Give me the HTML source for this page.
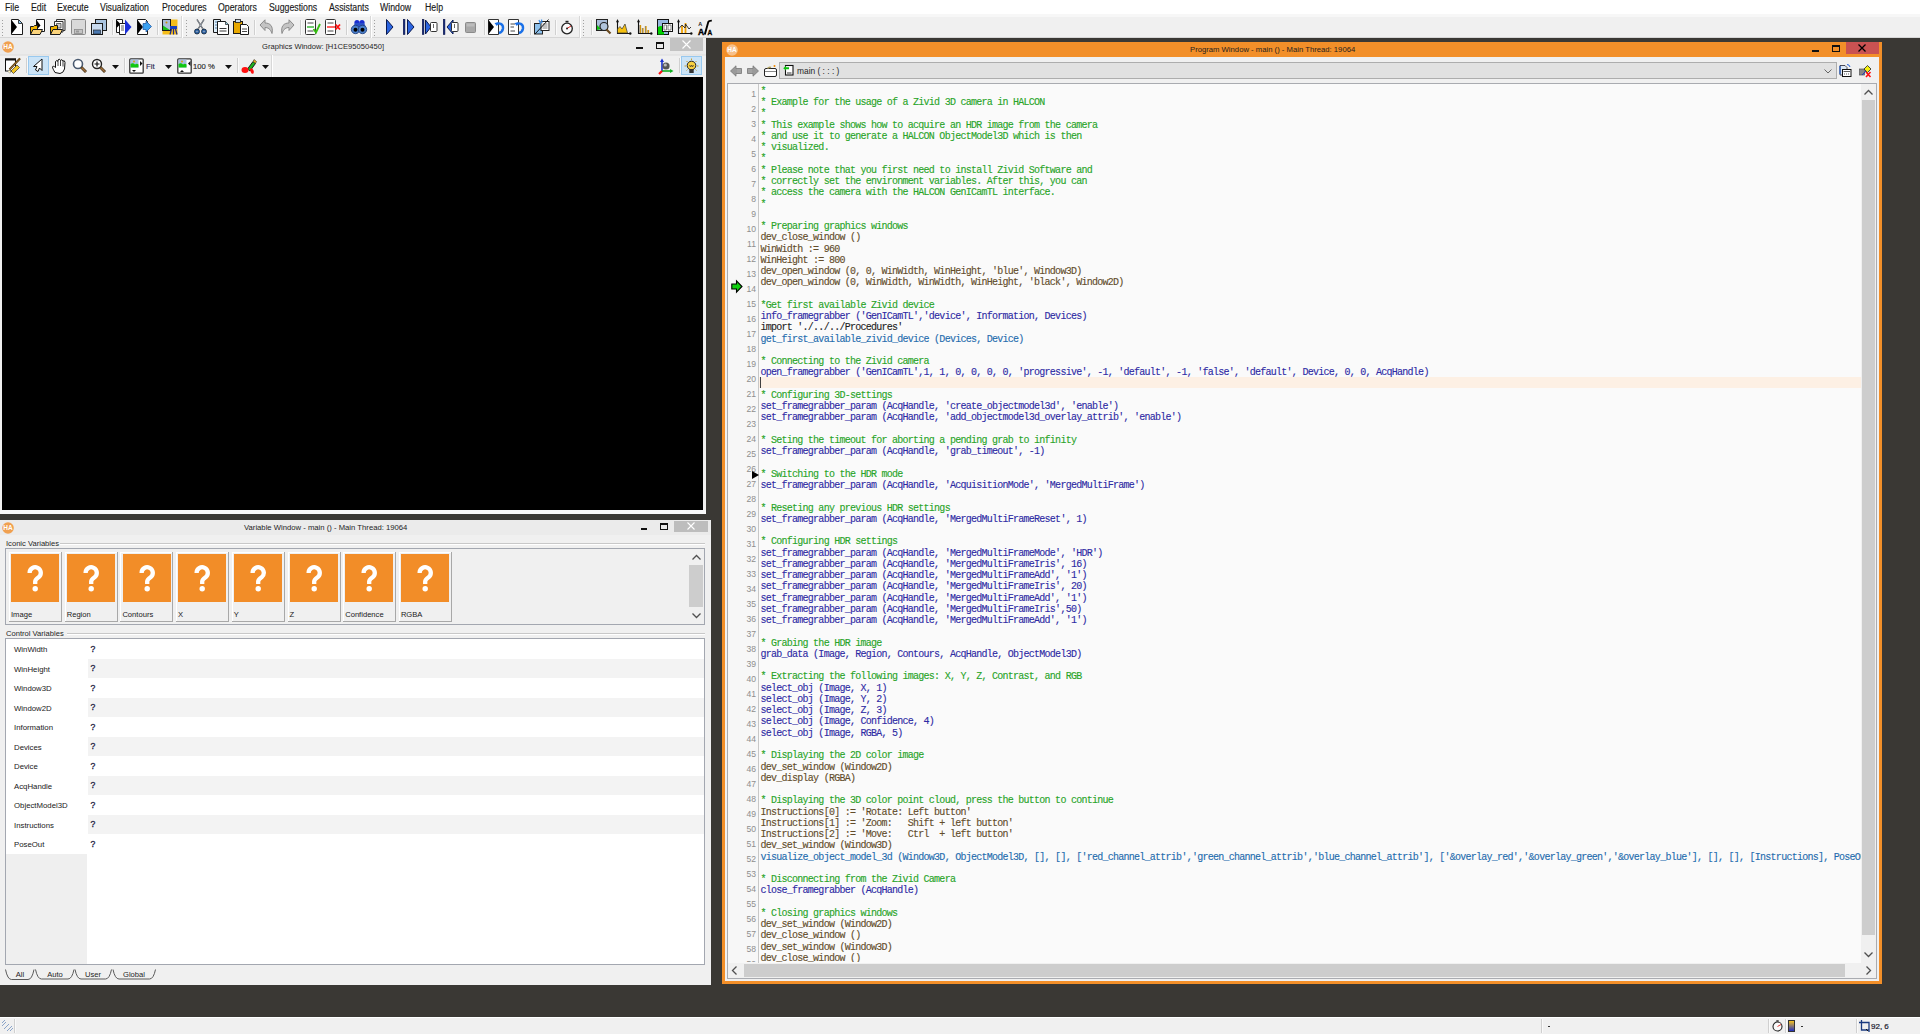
<!DOCTYPE html><html><head><meta charset="utf-8"><style>
*{margin:0;padding:0;box-sizing:border-box}
html,body{width:1920px;height:1034px;overflow:hidden}
body{position:relative;background:#3a3834;font-family:"Liberation Sans",sans-serif;font-size:10px;color:#000}
.a{position:absolute}
svg{position:absolute;overflow:visible}
#menubar{left:0;top:0;width:1920px;height:17px;background:linear-gradient(#fff 0,#fff 14px,#f7f7f7 14px,#f7f7f7 17px)}
#menubar span{position:absolute;top:2.1px;font-size:10px;line-height:12px;color:#1a1a1a;transform:scaleX(0.875);transform-origin:0 0;-webkit-text-stroke:0.15px #1a1a1a}
#toolbar{left:0;top:17px;width:1920px;height:21px;background:#f0f0f0;border-bottom:1px solid #d6d6d6}
.code{position:absolute;left:760.5px;white-space:pre;font-family:"Liberation Mono",monospace;font-size:10px;letter-spacing:-0.74px;-webkit-text-stroke:0.12px;line-height:11.26px;height:11.26px}
.c{color:#28a428}.o{color:#2e2aa4}.d{color:#624c2a}.p{color:#1f6cae}.k{color:#1e1e1e}
.ln{position:absolute;width:30px;left:726px;text-align:right;font-size:8.6px;color:#8e8e8e;line-height:10px}
.ttl{position:absolute;font-size:7.7px;line-height:10px;color:#1e1e1e;white-space:nowrap}
.vname{position:absolute;left:14px;font-size:7.8px;line-height:10px;color:#202020}
.vq{position:absolute;left:90.5px;font-size:8.6px;line-height:10px;color:#202040;-webkit-text-stroke:0.3px #202040}
.tile{position:absolute;top:552px;width:53px;height:70px;background:#f0f0f0;border-right:1px solid #a8a8a8;border-bottom:1px solid #a8a8a8;box-shadow:inset 1px 1px 0 #fff}
.tile .or{position:absolute;left:2.25px;top:2px;width:48px;height:48px;background:#f28d28}
.tile .q{position:absolute;left:0;top:9px;width:48px;text-align:center;font-size:33px;font-weight:bold;color:#fff;line-height:33px}
.tile .lb{position:absolute;left:2px;top:57.5px;font-size:7.6px;line-height:10px;color:#202020}
</style></head><body>
<div id="menubar" class="a"><span style="left:5px">File</span><span style="left:31px">Edit</span><span style="left:57px">Execute</span><span style="left:100px">Visualization</span><span style="left:162px">Procedures</span><span style="left:218px">Operators</span><span style="left:269px">Suggestions</span><span style="left:329px">Assistants</span><span style="left:380px">Window</span><span style="left:425px">Help</span></div>
<div id="toolbar" class="a"></div>
<svg style="left:10px;top:19px" width="16" height="16" viewBox="0 0 16 16"><path d="M1.5 .5H8.5L12.5 4.5V15.5H1.5Z" fill="#fff" stroke="#1a1a1a"/><path d="M1.5 1L7 8L1.5 15Z" fill="#000"/><path d="M8.5 1V4.5H12" fill="#8cc8f0" stroke="#1a1a1a" stroke-width=".8"/></svg>
<svg style="left:30px;top:19px" width="16" height="16" viewBox="0 0 16 16"><path d="M6.5 .5H14.5V12.5H6.5Z" fill="#fff" stroke="#1a1a1a"/><path d="M6.5 1L10.5 6.5L6.5 11Z" fill="#000"/><path d="M.5 7.5H3.5L4.5 6.5H7.5V15.5H.5Z" fill="#f0b400" stroke="#1a1a1a"/><path d="M.5 15.5L3 10.5H12.5L10 15.5Z" fill="#fbd47c" stroke="#1a1a1a"/></svg>
<svg style="left:50px;top:19px" width="16" height="16" viewBox="0 0 16 16"><path d="M6.5 .5H15V11.5H6.5Z" fill="#eee" stroke="#333"/><path d="M4.5 2.5H13V13H4.5Z" fill="#fff" stroke="#333"/><path d="M6.5 4.5H11V9H6.5Z" fill="#ccc" stroke="#333" stroke-width=".7"/><path d="M.5 7.5H3.5L4.5 6.5H7.5V15.5H.5Z" fill="#f0b400" stroke="#1a1a1a"/><path d="M.5 15.5L3 10.5H12.5L10 15.5Z" fill="#fbd47c" stroke="#1a1a1a"/></svg>
<svg style="left:70.5px;top:19px" width="16" height="16" viewBox="0 0 16 16"><rect x=".5" y=".5" width="14" height="15" rx="1" fill="#d9d9d9" stroke="#8a8a8a"/><rect x="3.5" y="10.5" width="8" height="4" fill="#c4c4c4" stroke="#8a8a8a" stroke-width=".8"/><rect x="5" y="11.5" width="3" height="2" fill="#999"/></svg>
<svg style="left:90.5px;top:19px" width="16" height="16" viewBox="0 0 16 16"><rect x="4.5" y=".5" width="11" height="11" fill="#a9c4e0" stroke="#1a1a1a"/><rect x=".5" y="4.5" width="11" height="11" fill="#c8daef" stroke="#1a1a1a"/><rect x="2.5" y="11" width="7" height="4" fill="#4a78b0" stroke="#1a1a1a" stroke-width=".6"/></svg>
<svg style="left:116px;top:19px" width="16" height="16" viewBox="0 0 16 16"><path d="M.5 .5H6.5V13.5H.5Z" fill="#fff" stroke="#1a1a1a"/><path d="M.5 1L4.5 5L.5 9Z" fill="#000"/><path d="M3.5 4.5H9.5V15.5H3.5Z" fill="#fff" stroke="#1a1a1a"/><path d="M5 7H8M5 9H8M5 11H8" stroke="#333" stroke-width=".8"/><path d="M9 .5L15.5 8L9 15.5Z" fill="#1a2ed8"/></svg>
<svg style="left:136.5px;top:19px" width="16" height="16" viewBox="0 0 16 16"><path d="M.5 .5H8.5L10.5 2.5V15.5H.5Z" fill="#fff" stroke="#1a1a1a"/><path d="M.5 1L6 8L.5 15Z" fill="#000"/><path d="M6 4.5H9V2L14.5 7.5L9 13V10.5H6Z" fill="#3aa0f0" stroke="#1d4f9a" stroke-width=".7"/></svg>
<svg style="left:162px;top:19px" width="16" height="16" viewBox="0 0 16 16"><rect x=".5" y=".5" width="15" height="15" fill="#f5bd1a"/><rect x=".5" y=".5" width="8" height="11" fill="#a8bdd8" stroke="#1a1a1a"/><path d="M1 11V6.5L4 8.5L8 11Z" fill="#18c018"/><circle cx="4.5" cy="3.5" r="1" fill="#c89000"/><rect x="8" y="7" width="7" height="3" fill="#1840c0"/><path d="M9.5 10L8 15.5M11.5 10V15.5M13.5 10L15 15.5" stroke="#1a2a90" stroke-width="1.2"/></svg>
<svg style="left:194px;top:19px" width="16" height="16" viewBox="0 0 16 16"><path d="M3 .5L9.5 11M10 .5L3.5 11" stroke="#333" stroke-width="1.4" fill="none"/><path d="M3.2 .8L8.8 10M9.8 .8L4.2 10" stroke="#d8e8ff" stroke-width=".5"/><circle cx="3" cy="12.5" r="2.5" fill="#2d64a8" stroke="#123" stroke-width=".8"/><circle cx="10" cy="12.5" r="2.5" fill="#2d64a8" stroke="#123" stroke-width=".8"/><circle cx="3" cy="12.5" r=".7" fill="#bbb"/><circle cx="10" cy="12.5" r=".7" fill="#bbb"/></svg>
<svg style="left:213px;top:19px" width="16" height="16" viewBox="0 0 16 16"><path d="M.5 .5H7.5V13.5H.5Z" fill="#dfeffa" stroke="#1a1a1a"/><path d="M2 3H6M2 6H6M2 9H6" stroke="#5580aa" stroke-width="1"/><path d="M4.5 2.5H12.5L15.5 5.5V15.5H4.5Z" fill="#fff" stroke="#1a1a1a"/><path d="M6.5 9.5H13.5M6.5 12H13.5" stroke="#222" stroke-width=".9"/><path d="M12.5 2.5V5.5H15.5" fill="#9cd" stroke="#1a1a1a" stroke-width=".7"/></svg>
<svg style="left:233px;top:19px" width="16" height="16" viewBox="0 0 16 16"><rect x=".5" y="2.5" width="9" height="12" fill="#e8a800" stroke="#1a1a1a"/><rect x="2.5" y=".5" width="5" height="3" fill="#cde" stroke="#1a1a1a" stroke-width=".8"/><path d="M7.5 5.5H13.5L15.5 7.5V15.5H7.5Z" fill="#fff" stroke="#1a1a1a"/><path d="M9 10H14M9 12.5H14" stroke="#333" stroke-width=".9"/></svg>
<svg style="left:259px;top:19px" width="16" height="16" viewBox="0 0 16 16"><path d="M1 6L6 .8V4C11 4 14.5 7 13 14.5C11.5 10 9 8.5 6 8.5V11.5Z" fill="#c4c4c4" stroke="#8c8c8c" stroke-width="1"/></svg>
<svg style="left:279px;top:19px" width="16" height="16" viewBox="0 0 16 16"><path d="M15 6L10 .8V4C5 4 1.5 7 3 14.5C4.5 10 7 8.5 10 8.5V11.5Z" fill="#c4c4c4" stroke="#8c8c8c" stroke-width="1"/></svg>
<svg style="left:305px;top:19px" width="16" height="16" viewBox="0 0 16 16"><rect x=".5" y=".5" width="10" height="15" rx="1" fill="#fff" stroke="#333"/><path d="M2.5 4H8.5M2.5 12H8.5" stroke="#444" stroke-width="1"/><path d="M2 8H9" stroke="#30b030" stroke-width="1.4"/><path d="M8.5 10L11 13.5L15 5" stroke="#34c010" stroke-width="1.8" fill="none"/></svg>
<svg style="left:325px;top:19px" width="16" height="16" viewBox="0 0 16 16"><rect x=".5" y=".5" width="10" height="15" rx="1" fill="#fff" stroke="#333"/><path d="M2.5 4H8.5M2.5 12H8.5" stroke="#444" stroke-width="1"/><path d="M2 8H10" stroke="#ff2020" stroke-width="1.4"/><path d="M10.5 5.5L15 10.5M15 5.5L10.5 10.5" stroke="#ff1010" stroke-width="1.8"/></svg>
<svg style="left:350.5px;top:19px" width="16" height="16" viewBox="0 0 16 16"><circle cx="6" cy="3.5" r="2.6" fill="#1a2ed0"/><circle cx="11" cy="3.5" r="2.6" fill="#1a2ed0"/><path d="M2 8L4 4H13L15 8Z" fill="#2a50c8"/><circle cx="4.5" cy="10.5" r="4.2" fill="#4a7ec8" stroke="#1c3a7a" stroke-width=".8"/><circle cx="11.5" cy="10.5" r="4.2" fill="#4a7ec8" stroke="#1c3a7a" stroke-width=".8"/><circle cx="4.5" cy="10.8" r="2" fill="#000"/><circle cx="11.5" cy="10.8" r="2" fill="#000"/></svg>
<svg style="left:385.5px;top:19px" width="16" height="16" viewBox="0 0 16 16"><path d="M.5 .5L7 8L.5 15.5Z" fill="#2a64e0" stroke="#0a1a50" stroke-width="1"/></svg>
<svg style="left:403px;top:19px" width="16" height="16" viewBox="0 0 16 16"><rect x=".3" y=".5" width="1.6" height="15" fill="#0a2a8a" stroke="#0a1040" stroke-width=".6"/><path d="M4.5 .5L11 8L4.5 15.5Z" fill="#2a64e0" stroke="#0a1a50" stroke-width="1"/></svg>
<svg style="left:422px;top:19px" width="16" height="16" viewBox="0 0 16 16"><rect x=".3" y=".5" width="1.6" height="15" fill="#0a2a8a" stroke="#0a1040" stroke-width=".6"/><path d="M3.5 1L9 8L3.5 15Z" fill="#2a64e0" stroke="#0a1a50" stroke-width="1"/><rect x="8.5" y="3.5" width="6.5" height="9" rx="1" fill="#fff" stroke="#333"/><path d="M11.5 5V9" stroke="#555" stroke-width=".9"/></svg>
<svg style="left:442.5px;top:19px" width="16" height="16" viewBox="0 0 16 16"><rect x=".3" y=".5" width="1.6" height="15" fill="#0a2a8a" stroke="#0a1040" stroke-width=".6"/><path d="M10 1L4 8L10 15Z" fill="#2a64e0" stroke="#0a1a50" stroke-width="1"/><rect x="8.5" y="3.5" width="6.5" height="9" rx="1" fill="#fff" stroke="#333"/><path d="M11.5 5V9" stroke="#555" stroke-width=".9"/></svg>
<svg style="left:465px;top:22px" width="16" height="16" viewBox="0 0 16 16"><rect x=".5" y=".5" width="10" height="10" rx="1" fill="#a8a8a8" stroke="#8a8a8a"/><rect x="1.5" y="1.5" width="8" height="3" fill="#bcbcbc"/></svg>
<svg style="left:488px;top:19px" width="16" height="16" viewBox="0 0 16 16"><path d="M.5 .5H10.5V15.5H.5Z" fill="#fff" stroke="#333"/><path d="M.5 1L6 8L.5 15Z" fill="#000"/><path d="M8 5.5C11 3 15.5 5 15 9.5C14.6 12 13 13.5 11 14" stroke="#1a70e8" stroke-width="2.4" fill="none"/><path d="M6.5 4L10 3.5L9 7Z" fill="#1a70e8"/></svg>
<svg style="left:508px;top:19px" width="16" height="16" viewBox="0 0 16 16"><path d="M.5 .5H10.5V15.5H.5Z" fill="#fff" stroke="#333"/><path d="M2.5 5H7M2.5 8H6M2.5 12H7" stroke="#333" stroke-width=".9"/><path d="M8 5.5C11 3 15.5 5 15 9.5C14.6 12 13 13.5 11 14" stroke="#1a70e8" stroke-width="2.4" fill="none"/><path d="M6.5 4L10 3.5L9 7Z" fill="#1a70e8"/></svg>
<svg style="left:534px;top:19px" width="16" height="16" viewBox="0 0 16 16"><rect x=".5" y="4.5" width="8" height="10.5" fill="#8cc0ec" stroke="#222"/><rect x="7" y="2.5" width="8" height="9" fill="#fff" stroke="#222"/><path d="M8.5 5H13.5M8.5 7H13.5M8.5 9H13.5" stroke="#666" stroke-width=".8"/><path d="M1 15L14.5 .5" stroke="#111" stroke-width="1"/><path d="M5 1L6.5 5M7.5 .5L8 4" stroke="#3a90f0" stroke-width="1.2"/></svg>
<svg style="left:561px;top:20px" width="16" height="16" viewBox="0 0 16 16"><circle cx="6" cy="8.5" r="5.3" fill="#fafafa" stroke="#222" stroke-width="1.3"/><rect x="4.5" y=".8" width="3" height="1.6" fill="#222"/><path d="M6 8.5L10 6" stroke="#e02020" stroke-width="1"/><circle cx="6" cy="8.5" r=".9" fill="#111"/></svg>
<svg style="left:596px;top:19px" width="16" height="16" viewBox="0 0 16 16"><rect x=".5" y=".5" width="11" height="11" fill="#a8bcd8" stroke="#222"/><path d="M1 11V6L5 10Z" fill="#10c010"/><circle cx="8" cy="7.5" r="4" fill="#b0c4dc" stroke="#222" stroke-width="1.2"/><path d="M10.5 10.5L14.5 14.5" stroke="#6a4a20" stroke-width="2.2"/></svg>
<svg style="left:616px;top:19px" width="16" height="16" viewBox="0 0 16 16"><path d="M1.5 2V14.5H14" stroke="#111" stroke-width="1.1" fill="none"/><path d="M0 3.2L1.5 0L3 3.2Z" fill="#111"/><circle cx="14.3" cy="14.5" r="1.2" fill="#111"/><path d="M1.5 14V10L4 7.5L6 10L9 5L11.5 14Z" fill="#f5c010" stroke="#333" stroke-width=".7"/></svg>
<svg style="left:636.5px;top:19px" width="16" height="16" viewBox="0 0 16 16"><path d="M1.5 2V14.5H14" stroke="#111" stroke-width="1.1" fill="none"/><path d="M0 3.2L1.5 0L3 3.2Z" fill="#111"/><circle cx="14.3" cy="14.5" r="1.2" fill="#111"/><path d="M3.5 14V6M6 14V9M9 14V7M11.5 14V11" stroke="#e8a000" stroke-width="1.3"/><path d="M2.8 14V6M5.3 14V9M8.3 14V7M10.8 14V11" stroke="#555" stroke-width=".6"/></svg>
<svg style="left:657px;top:19px" width="16" height="16" viewBox="0 0 16 16"><rect x=".5" y=".5" width="11" height="15" fill="#98b8e0" stroke="#111"/><path d="M1 15.5V8Q4 6 7 8V15.5Z" fill="#00d000"/><rect x="5.5" y="4.5" width="10" height="8" fill="#fff" stroke="#111"/><path d="M7 6H9.5V11H7ZM11 6H14V11H11Z" fill="none" stroke="#555" stroke-width=".7"/></svg>
<svg style="left:677px;top:19px" width="16" height="16" viewBox="0 0 16 16"><path d="M1.5 2V14.5H14" stroke="#111" stroke-width="1.1" fill="none"/><path d="M0 3.2L1.5 0L3 3.2Z" fill="#111"/><circle cx="14.3" cy="14.5" r="1.2" fill="#111"/><path d="M5 14V7M8.5 14V4" stroke="#f0a000" stroke-width="1.8"/><path d="M1.5 10L5 6L8 9L8.5 5L12 10L14 8" stroke="#222" stroke-width=".9" fill="none"/></svg>
<svg style="left:697.5px;top:19px" width="16" height="16" viewBox="0 0 16 16"><text x="0.3" y="7" font-family="Liberation Sans" font-size="5.5" font-weight="bold" fill="#222">A</text><text x="0" y="15.5" font-family="Liberation Sans" font-size="8.5" font-weight="bold" fill="#000" stroke="#000" stroke-width=".4">A</text><path d="M6.8 15.5L10.2 3.2Q10.8 1.6 13.8 1.6" stroke="#000" stroke-width="1.9" fill="none"/><text x="9.6" y="15.5" font-family="Liberation Sans" font-size="6.5" font-weight="bold" fill="#000" stroke="#000" stroke-width=".3">A</text></svg>
<div class="a" style="left:111.5px;top:20px;width:1px;height:15px;background:#d0d0d0;box-shadow:1px 0 0 #fafafa"></div>
<div class="a" style="left:157px;top:20px;width:1px;height:15px;background:#d0d0d0;box-shadow:1px 0 0 #fafafa"></div>
<div class="a" style="left:254px;top:20px;width:1px;height:15px;background:#d0d0d0;box-shadow:1px 0 0 #fafafa"></div>
<div class="a" style="left:300px;top:20px;width:1px;height:15px;background:#d0d0d0;box-shadow:1px 0 0 #fafafa"></div>
<div class="a" style="left:346px;top:20px;width:1px;height:15px;background:#d0d0d0;box-shadow:1px 0 0 #fafafa"></div>
<div class="a" style="left:483.5px;top:20px;width:1px;height:15px;background:#d0d0d0;box-shadow:1px 0 0 #fafafa"></div>
<div class="a" style="left:529.5px;top:20px;width:1px;height:15px;background:#d0d0d0;box-shadow:1px 0 0 #fafafa"></div>
<div class="a" style="left:554.5px;top:20px;width:1px;height:15px;background:#d0d0d0;box-shadow:1px 0 0 #fafafa"></div>
<div class="a" style="left:591px;top:20px;width:1px;height:15px;background:#d0d0d0;box-shadow:1px 0 0 #fafafa"></div>
<div class="a" style="left:181px;top:16px;width:1px;height:22px;background:#d8d8d8;box-shadow:1px 0 0 #fff"></div>
<div class="a" style="left:369.5px;top:16px;width:1px;height:22px;background:#d8d8d8;box-shadow:1px 0 0 #fff"></div>
<div class="a" style="left:579px;top:16px;width:1px;height:22px;background:#d8d8d8;box-shadow:1px 0 0 #fff"></div>
<div class="a" style="left:2px;top:20px;width:1px;height:1px;background:#a0a0a0"></div>
<div class="a" style="left:2px;top:23px;width:1px;height:1px;background:#a0a0a0"></div>
<div class="a" style="left:2px;top:26px;width:1px;height:1px;background:#a0a0a0"></div>
<div class="a" style="left:2px;top:29px;width:1px;height:1px;background:#a0a0a0"></div>
<div class="a" style="left:2px;top:32px;width:1px;height:1px;background:#a0a0a0"></div>
<div class="a" style="left:2px;top:35px;width:1px;height:1px;background:#a0a0a0"></div>
<div class="a" style="left:185.5px;top:20px;width:1px;height:1px;background:#a0a0a0"></div>
<div class="a" style="left:185.5px;top:23px;width:1px;height:1px;background:#a0a0a0"></div>
<div class="a" style="left:185.5px;top:26px;width:1px;height:1px;background:#a0a0a0"></div>
<div class="a" style="left:185.5px;top:29px;width:1px;height:1px;background:#a0a0a0"></div>
<div class="a" style="left:185.5px;top:32px;width:1px;height:1px;background:#a0a0a0"></div>
<div class="a" style="left:185.5px;top:35px;width:1px;height:1px;background:#a0a0a0"></div>
<div class="a" style="left:374px;top:20px;width:1px;height:1px;background:#a0a0a0"></div>
<div class="a" style="left:374px;top:23px;width:1px;height:1px;background:#a0a0a0"></div>
<div class="a" style="left:374px;top:26px;width:1px;height:1px;background:#a0a0a0"></div>
<div class="a" style="left:374px;top:29px;width:1px;height:1px;background:#a0a0a0"></div>
<div class="a" style="left:374px;top:32px;width:1px;height:1px;background:#a0a0a0"></div>
<div class="a" style="left:374px;top:35px;width:1px;height:1px;background:#a0a0a0"></div>
<div class="a" style="left:582.5px;top:20px;width:1px;height:1px;background:#a0a0a0"></div>
<div class="a" style="left:582.5px;top:23px;width:1px;height:1px;background:#a0a0a0"></div>
<div class="a" style="left:582.5px;top:26px;width:1px;height:1px;background:#a0a0a0"></div>
<div class="a" style="left:582.5px;top:29px;width:1px;height:1px;background:#a0a0a0"></div>
<div class="a" style="left:582.5px;top:32px;width:1px;height:1px;background:#a0a0a0"></div>
<div class="a" style="left:582.5px;top:35px;width:1px;height:1px;background:#a0a0a0"></div>
<div class="a" style="left:0;top:38px;width:706px;height:476px;background:#f0f0f0"></div>
<div class="a" style="left:0;top:38px;width:706px;height:16px;background:#ebebeb"></div>
<div class="a" style="left:0;top:54px;width:706px;height:1px;background:#e4e4e4"></div>
<div class="a" style="left:670px;top:38px;width:33px;height:13px;background:#c3c3c3"></div>
<div class="ttl" style="left:262px;top:42.2px;font-size:7.6px">Graphics Window: [H1CE95050450]</div>
<svg style="left:1.5px;top:40.5px" width="12" height="12" viewBox="0 0 12 12"><circle cx="6" cy="6" r="5.8" fill="#f0a050"/><text x="6" y="8.3" text-anchor="middle" font-family="Liberation Sans" font-size="6.5" font-weight="bold" fill="#fff">HA</text></svg>
<div class="a" style="left:636px;top:47px;width:7px;height:2px;background:#111"></div>
<div class="a" style="left:656px;top:42px;width:8px;height:7px;border:1px solid #111;border-top-width:2px"></div>
<svg style="left:682px;top:40px" width="9" height="9" viewBox="0 0 9 9"><path d="M.5 .5L8.5 8.5M8.5 .5L.5 8.5" stroke="#fff" stroke-width="1.1"/></svg>
<div class="a" style="left:0;top:55px;width:706px;height:22px;background:#f0f0f0;border-top:1px solid #e6e6e6"></div>
<div class="a" style="left:28px;top:56px;width:21px;height:19px;background:#cce4f7;border:1px solid #99c9ef"></div>
<div class="a" style="left:681px;top:56px;width:21px;height:19px;background:#cce4f7;border:1px solid #99c9ef"></div>
<svg style="left:5px;top:58px" width="16" height="16" viewBox="0 0 16 16"><rect x=".5" y="1" width="10" height="12" fill="#fff" stroke="#111"/><rect x="0" y=".5" width="11" height="2" fill="#111"/><path d="M6 13L12 7L14.5 9.5L8.5 15.5Z" fill="#f2c420" stroke="#333" stroke-width=".7"/><path d="M4 12L6 14L4.8 15.3L2.8 13.3Z" fill="#fff6c8" stroke="#555" stroke-width=".4"/><path d="M15 .5L4.5 11.5" stroke="#4a3008" stroke-width="2"/><path d="M15 .5L4.5 11.5" stroke="#c08a40" stroke-width=".8"/></svg>
<svg style="left:31px;top:58px" width="16" height="16" viewBox="0 0 16 16"><path d="M11 1L2.5 8.5H6L4.5 12L7 13.5L8.5 10L11 12.5Z" fill="#fff" stroke="#111" stroke-width="1" stroke-linejoin="round"/></svg>
<svg style="left:51.5px;top:58px" width="16" height="16" viewBox="0 0 16 16"><path d="M3 14.5C1.5 12 .5 10 .5 9S2 8 3.5 9.5V3.5Q5 1.5 6 3.5V2Q7.5 0 8.5 2.5Q10 .5 11 3Q12.8 2 13 4.5L12.5 11Q11.5 15 8 15.5Z" fill="#fff" stroke="#111" stroke-width="1"/><path d="M6 3.5V8M8.5 2.5V8M11 3V8.5" stroke="#111" stroke-width=".8"/></svg>
<svg style="left:71.5px;top:58px" width="16" height="16" viewBox="0 0 16 16"><circle cx="6" cy="6" r="4.5" fill="#fff" stroke="#4a5a70" stroke-width="1.6"/><path d="M9.3 9.3L14 14" stroke="#3a2a10" stroke-width="2.8"/><path d="M9.6 9.6L13.8 13.8" stroke="#a07040" stroke-width="1.5"/></svg>
<svg style="left:91px;top:58px" width="16" height="16" viewBox="0 0 16 16"><circle cx="6" cy="6" r="4.5" fill="#fff" stroke="#222" stroke-width="1.4"/><path d="M3.5 6H8.5M6 3.5V8.5" stroke="#111" stroke-width="1.2"/><path d="M9.3 9.3L14 14" stroke="#3a2a10" stroke-width="2.8"/><path d="M9.6 9.6L13.8 13.8" stroke="#a07040" stroke-width="1.5"/></svg>
<svg style="left:129px;top:58px" width="16" height="16" viewBox="0 0 16 16"><rect x=".8" y=".8" width="13.4" height="14.4" rx="1" fill="#fff" stroke="#333" stroke-width="1.3"/><rect x="1.5" y="1.5" width="8" height="8" fill="#a8c0e0"/><path d="M1.5 9.5V6Q4 4.5 6 6.5Q8 5 9.5 6.5V9.5Z" fill="#10c810"/><circle cx="5" cy="3.5" r="1" fill="#e0a010"/><path d="M11 3L13.5 5.5L11 8Z" fill="#111"/><path d="M3 12H7L5 14Z" fill="#111"/></svg>
<svg style="left:176.5px;top:58px" width="16" height="16" viewBox="0 0 16 16"><rect x=".8" y=".8" width="13.4" height="14.4" rx="1" fill="#fff" stroke="#333" stroke-width="1.3"/><rect x="1.5" y="1.5" width="8" height="8" fill="#a8c0e0"/><path d="M1.5 9.5V6Q4 4.5 6 6.5Q8 5 9.5 6.5V9.5Z" fill="#10c810"/><circle cx="5" cy="3.5" r="1" fill="#e0a010"/><path d="M13.5 3L11 5.5L13.5 8Z" fill="#111"/><path d="M3 14H7L5 12Z" fill="#111"/></svg>
<svg style="left:240.5px;top:58px" width="16" height="16" viewBox="0 0 16 16"><path d="M6.5 11L12 3.5L14.5 5.5L9 13Z" fill="#20b020" stroke="#111" stroke-width=".9"/><path d="M12 3.5L13 1.5L15.5 3.5L14.5 5.5Z" fill="#f0b020" stroke="#333" stroke-width=".6"/><ellipse cx="4" cy="12" rx="3.5" ry="3" fill="#ff1010"/><ellipse cx="11" cy="13" rx="1.6" ry="3" fill="#ff1010" transform="rotate(-25 11 13)"/></svg>
<svg style="left:658px;top:58px" width="16" height="16" viewBox="0 0 16 16"><path d="M4 14V2" stroke="#1830d0" stroke-width="1.6"/><path d="M2 4L4 .5L6 4Z" fill="#1830d0"/><path d="M4 13H13" stroke="#10b020" stroke-width="1.6"/><path d="M12 11L15.5 13L12 15Z" fill="#10b020"/><path d="M4 13L1 16" stroke="#ff1010" stroke-width="2.2"/><circle cx="8" cy="8" r="3.6" fill="#555"/><circle cx="7.3" cy="7" r="1.6" fill="#bbb"/></svg>
<svg style="left:684px;top:58px" width="16" height="16" viewBox="0 0 16 16"><path d="M7.5 .5V2M2.5 3L3.5 4M12.5 3L11.5 4M.5 8H2M13 8H14.5M2.5 12.5L3.5 11.5M12.5 12.5L11.5 11.5" stroke="#c8a030" stroke-width="1"/><circle cx="7.5" cy="7.5" r="4.3" fill="#f8d040" stroke="#222" stroke-width="1"/><path d="M5.5 7L6.5 9L7.5 7L8.5 9L9.5 7" stroke="#333" stroke-width=".7" fill="none"/><rect x="5.3" y="11" width="4.4" height="4" fill="#333"/></svg>
<svg style="left:112px;top:64.5px" width="7" height="4" viewBox="0 0 7 4"><path d="M0 0H7L3.5 4Z" fill="#111"/></svg>
<svg style="left:165px;top:64.5px" width="7" height="4" viewBox="0 0 7 4"><path d="M0 0H7L3.5 4Z" fill="#111"/></svg>
<svg style="left:225px;top:64.5px" width="7" height="4" viewBox="0 0 7 4"><path d="M0 0H7L3.5 4Z" fill="#111"/></svg>
<svg style="left:262px;top:64.5px" width="7" height="4" viewBox="0 0 7 4"><path d="M0 0H7L3.5 4Z" fill="#111"/></svg>
<div class="a" style="left:25.5px;top:58px;width:1px;height:15px;background:#d0d0d0;box-shadow:1px 0 0 #fafafa"></div>
<div class="a" style="left:123.5px;top:58px;width:1px;height:15px;background:#d0d0d0;box-shadow:1px 0 0 #fafafa"></div>
<div class="a" style="left:237px;top:58px;width:1px;height:15px;background:#d0d0d0;box-shadow:1px 0 0 #fafafa"></div>
<div class="a" style="left:678.5px;top:58px;width:1px;height:15px;background:#d0d0d0;box-shadow:1px 0 0 #fafafa"></div>
<div class="a" style="left:271px;top:55px;width:1px;height:22px;background:#d8d8d8;box-shadow:1px 0 0 #fff"></div>
<div class="ttl" style="left:146px;top:62px;color:#2a2a50;-webkit-text-stroke:0.15px #2a2a50">Fit</div>
<div class="ttl" style="left:193px;top:62px;color:#2a2a2a;-webkit-text-stroke:0.15px #2a2a2a">100 %</div>
<div class="a" style="left:2px;top:77px;width:701px;height:433px;background:#000"></div>
<div class="a" style="left:0;top:510px;width:706px;height:4px;background:#f8f8f8"></div>
<div class="a" style="left:0;top:520px;width:711px;height:465px;background:#f0f0f0"></div>
<div class="a" style="left:0;top:520px;width:711px;height:15px;background:#ebebeb"></div>
<div class="a" style="left:674px;top:521px;width:34px;height:11px;background:#bdbdbd"></div>
<div class="ttl" style="left:244px;top:523.1px">Variable Window - main () - Main Thread: 19064</div>
<svg style="left:2px;top:522px" width="12" height="12" viewBox="0 0 12 12"><circle cx="6" cy="6" r="5.8" fill="#f0a050"/><text x="6" y="8.3" text-anchor="middle" font-family="Liberation Sans" font-size="6.5" font-weight="bold" fill="#fff">HA</text></svg>
<div class="a" style="left:641px;top:528px;width:6px;height:2px;background:#111"></div>
<div class="a" style="left:660px;top:523px;width:8px;height:7px;border:1px solid #111;border-top-width:2px"></div>
<svg style="left:687px;top:522px" width="8" height="8" viewBox="0 0 8 8"><path d="M.5 .5L7.5 7.5M7.5 .5L.5 7.5" stroke="#fff" stroke-width="1.1"/></svg>
<div class="ttl" style="left:6px;top:539.3px;font-size:7.6px">Iconic Variables</div>
<div class="a" style="left:60px;top:543px;width:645px;height:2px;border-top:1px solid #c8c8c8;border-bottom:1px solid #fff"></div>
<div class="a" style="left:5px;top:548px;width:700px;height:77px;border:1px solid #a3a7b0;background:#f0f0f0"></div>
<div class="tile" style="left:9.0px"><div class="or"><svg style="left:0;top:0" width="48" height="48" viewBox="0 0 48 48"><path d="M18.6 18.9A5.6 5.6 0 1 1 27.6 23.3Q24.2 25.6 24.2 27.5V30" stroke="#fff" stroke-width="4.3" fill="none"/><circle cx="24.2" cy="34.7" r="2.7" fill="#fff"/></svg></div><div class="lb">Image</div></div>
<div class="tile" style="left:64.7px"><div class="or"><svg style="left:0;top:0" width="48" height="48" viewBox="0 0 48 48"><path d="M18.6 18.9A5.6 5.6 0 1 1 27.6 23.3Q24.2 25.6 24.2 27.5V30" stroke="#fff" stroke-width="4.3" fill="none"/><circle cx="24.2" cy="34.7" r="2.7" fill="#fff"/></svg></div><div class="lb">Region</div></div>
<div class="tile" style="left:120.4px"><div class="or"><svg style="left:0;top:0" width="48" height="48" viewBox="0 0 48 48"><path d="M18.6 18.9A5.6 5.6 0 1 1 27.6 23.3Q24.2 25.6 24.2 27.5V30" stroke="#fff" stroke-width="4.3" fill="none"/><circle cx="24.2" cy="34.7" r="2.7" fill="#fff"/></svg></div><div class="lb">Contours</div></div>
<div class="tile" style="left:176.1px"><div class="or"><svg style="left:0;top:0" width="48" height="48" viewBox="0 0 48 48"><path d="M18.6 18.9A5.6 5.6 0 1 1 27.6 23.3Q24.2 25.6 24.2 27.5V30" stroke="#fff" stroke-width="4.3" fill="none"/><circle cx="24.2" cy="34.7" r="2.7" fill="#fff"/></svg></div><div class="lb">X</div></div>
<div class="tile" style="left:231.8px"><div class="or"><svg style="left:0;top:0" width="48" height="48" viewBox="0 0 48 48"><path d="M18.6 18.9A5.6 5.6 0 1 1 27.6 23.3Q24.2 25.6 24.2 27.5V30" stroke="#fff" stroke-width="4.3" fill="none"/><circle cx="24.2" cy="34.7" r="2.7" fill="#fff"/></svg></div><div class="lb">Y</div></div>
<div class="tile" style="left:287.5px"><div class="or"><svg style="left:0;top:0" width="48" height="48" viewBox="0 0 48 48"><path d="M18.6 18.9A5.6 5.6 0 1 1 27.6 23.3Q24.2 25.6 24.2 27.5V30" stroke="#fff" stroke-width="4.3" fill="none"/><circle cx="24.2" cy="34.7" r="2.7" fill="#fff"/></svg></div><div class="lb">Z</div></div>
<div class="tile" style="left:343.2px"><div class="or"><svg style="left:0;top:0" width="48" height="48" viewBox="0 0 48 48"><path d="M18.6 18.9A5.6 5.6 0 1 1 27.6 23.3Q24.2 25.6 24.2 27.5V30" stroke="#fff" stroke-width="4.3" fill="none"/><circle cx="24.2" cy="34.7" r="2.7" fill="#fff"/></svg></div><div class="lb">Confidence</div></div>
<div class="tile" style="left:398.9px"><div class="or"><svg style="left:0;top:0" width="48" height="48" viewBox="0 0 48 48"><path d="M18.6 18.9A5.6 5.6 0 1 1 27.6 23.3Q24.2 25.6 24.2 27.5V30" stroke="#fff" stroke-width="4.3" fill="none"/><circle cx="24.2" cy="34.7" r="2.7" fill="#fff"/></svg></div><div class="lb">RGBA</div></div>
<div class="a" style="left:688px;top:549px;width:16px;height:75px;background:#f0f0f0"></div>
<div class="a" style="left:689px;top:565px;width:14px;height:42px;background:#cdcdcd"></div>
<div class="ttl" style="left:6px;top:629.2px;font-size:7.6px">Control Variables</div>
<div class="a" style="left:67px;top:633px;width:638px;height:2px;border-top:1px solid #c8c8c8;border-bottom:1px solid #fff"></div>
<div class="a" style="left:5px;top:638px;width:700px;height:327px;border:1px solid #a3a7b0;background:#fff"></div>
<div class="a" style="left:6px;top:639px;width:81px;height:325px;background:#efefef"></div>
<div class="a" style="left:6px;top:639.0px;width:81px;height:19.5px;background:#fff"></div>
<div class="a" style="left:88px;top:639.0px;width:616px;height:19.5px;background:#fff"></div>
<div class="vname" style="top:645.1px">WinWidth</div>
<div class="vq" style="top:643.6px">?</div>
<div class="a" style="left:6px;top:658.5px;width:81px;height:19.5px;background:#fff"></div>
<div class="a" style="left:88px;top:658.5px;width:616px;height:19.5px;background:#f3f3f3"></div>
<div class="vname" style="top:664.6px">WinHeight</div>
<div class="vq" style="top:663.1px">?</div>
<div class="a" style="left:6px;top:678.0px;width:81px;height:19.5px;background:#fff"></div>
<div class="a" style="left:88px;top:678.0px;width:616px;height:19.5px;background:#fff"></div>
<div class="vname" style="top:684.1px">Window3D</div>
<div class="vq" style="top:682.6px">?</div>
<div class="a" style="left:6px;top:697.5px;width:81px;height:19.5px;background:#fff"></div>
<div class="a" style="left:88px;top:697.5px;width:616px;height:19.5px;background:#f3f3f3"></div>
<div class="vname" style="top:703.6px">Window2D</div>
<div class="vq" style="top:702.1px">?</div>
<div class="a" style="left:6px;top:717.0px;width:81px;height:19.5px;background:#fff"></div>
<div class="a" style="left:88px;top:717.0px;width:616px;height:19.5px;background:#fff"></div>
<div class="vname" style="top:723.1px">Information</div>
<div class="vq" style="top:721.6px">?</div>
<div class="a" style="left:6px;top:736.5px;width:81px;height:19.5px;background:#fff"></div>
<div class="a" style="left:88px;top:736.5px;width:616px;height:19.5px;background:#f3f3f3"></div>
<div class="vname" style="top:742.6px">Devices</div>
<div class="vq" style="top:741.1px">?</div>
<div class="a" style="left:6px;top:756.0px;width:81px;height:19.5px;background:#fff"></div>
<div class="a" style="left:88px;top:756.0px;width:616px;height:19.5px;background:#fff"></div>
<div class="vname" style="top:762.1px">Device</div>
<div class="vq" style="top:760.6px">?</div>
<div class="a" style="left:6px;top:775.5px;width:81px;height:19.5px;background:#fff"></div>
<div class="a" style="left:88px;top:775.5px;width:616px;height:19.5px;background:#f3f3f3"></div>
<div class="vname" style="top:781.6px">AcqHandle</div>
<div class="vq" style="top:780.1px">?</div>
<div class="a" style="left:6px;top:795.0px;width:81px;height:19.5px;background:#fff"></div>
<div class="a" style="left:88px;top:795.0px;width:616px;height:19.5px;background:#fff"></div>
<div class="vname" style="top:801.1px">ObjectModel3D</div>
<div class="vq" style="top:799.6px">?</div>
<div class="a" style="left:6px;top:814.5px;width:81px;height:19.5px;background:#fff"></div>
<div class="a" style="left:88px;top:814.5px;width:616px;height:19.5px;background:#f3f3f3"></div>
<div class="vname" style="top:820.6px">Instructions</div>
<div class="vq" style="top:819.1px">?</div>
<div class="a" style="left:6px;top:834.0px;width:81px;height:19.5px;background:#fff"></div>
<div class="a" style="left:88px;top:834.0px;width:616px;height:19.5px;background:#fff"></div>
<div class="vname" style="top:840.1px">PoseOut</div>
<div class="vq" style="top:838.6px">?</div>
<svg style="left:0;top:0" width="200" height="990" viewBox="0 0 200 990"><path d="M5.5 969.5Q7.5 979.5 11.5 979.5H28Q32 979.5 34 969.5" stroke="#5a5a5a" stroke-width="1" fill="none"/></svg>
<svg style="left:0;top:0" width="200" height="990" viewBox="0 0 200 990"><path d="M35.5 969.5Q37.5 979 41.5 979H68Q72 979 74 969.5" stroke="#5a5a5a" stroke-width="1" fill="none"/></svg>
<svg style="left:0;top:0" width="200" height="990" viewBox="0 0 200 990"><path d="M75 969.5Q77 979 81 979H105.5Q109.5 979 111.5 969.5" stroke="#5a5a5a" stroke-width="1" fill="none"/></svg>
<svg style="left:0;top:0" width="200" height="990" viewBox="0 0 200 990"><path d="M113 969.5Q115 979 119 979H149.5Q153.5 979 155.5 969.5" stroke="#5a5a5a" stroke-width="1" fill="none"/></svg>
<div class="ttl" style="left:6px;top:969.5px;width:28px;text-align:center;font-size:7.6px">All</div>
<div class="ttl" style="left:36px;top:969.5px;width:38px;text-align:center;font-size:7.6px">Auto</div>
<div class="ttl" style="left:75px;top:969.5px;width:36px;text-align:center;font-size:7.6px">User</div>
<div class="ttl" style="left:113px;top:969.5px;width:42px;text-align:center;font-size:7.6px">Global</div>
<div class="a" style="left:722px;top:42px;width:1160px;height:942px;background:#f28f29"></div>
<div class="a" style="left:725px;top:57px;width:1154px;height:924px;background:#f0f0f0"></div>
<div class="a" style="left:1846px;top:42px;width:33px;height:12px;background:#c95252"></div>
<div class="ttl" style="left:1190px;top:44.9px">Program Window - main () - Main Thread: 19064</div>
<svg style="left:725.5px;top:43.5px" width="12" height="12" viewBox="0 0 12 12"><circle cx="6" cy="6" r="5.8" fill="#f7c08a"/><text x="6" y="8.3" text-anchor="middle" font-family="Liberation Sans" font-size="6.5" font-weight="bold" fill="#fff">HA</text></svg>
<div class="a" style="left:1812px;top:50px;width:7px;height:2px;background:#111"></div>
<div class="a" style="left:1832px;top:45px;width:8px;height:7px;border:1px solid #111;border-top-width:2px"></div>
<svg style="left:1858px;top:44px" width="8" height="8" viewBox="0 0 8 8"><path d="M.5 .5L7.5 7.5M7.5 .5L.5 7.5" stroke="#000" stroke-width="1.3"/></svg>
<svg style="left:730px;top:65px" width="12" height="12" viewBox="0 0 12 12"><path d="M.5 6L6 .8V3.5H11.5V8.5H6V11.2Z" fill="#9a9a9a" stroke="#777" stroke-width=".8"/><path d="M7 5H11M7 7H11" stroke="#bbb" stroke-width=".6"/></svg>
<svg style="left:747px;top:65px" width="12" height="12" viewBox="0 0 12 12"><path d="M11.5 6L6 .8V3.5H.5V8.5H6V11.2Z" fill="#9a9a9a" stroke="#777" stroke-width=".8"/><path d="M1 5H5M1 7H5" stroke="#bbb" stroke-width=".6"/></svg>
<svg style="left:764px;top:65px" width="13" height="12" viewBox="0 0 13 12"><rect x=".5" y="3.5" width="12" height="8" rx="1.5" fill="#fff" stroke="#222"/><path d="M1 6.5H12" stroke="#555" stroke-width=".7"/><path d="M3.5 3.5Q5 1.5 7 2.5" stroke="#b0a060" stroke-width="1.4" fill="none"/><circle cx="10.5" cy="1" r="1" fill="#f08a00"/></svg>
<svg style="left:1839px;top:64px" width="13" height="13" viewBox="0 0 13 13"><path d="M1 1.5H6L8 3.5V11H1Z" fill="#dde8f5" stroke="#223" stroke-width=".8"/><rect x="3.5" y="5.5" width="8.5" height="7" fill="#fff" stroke="#111" stroke-width="1"/><path d="M4.5 7.5H11M5 10H6M7 10H8M9 10H10" stroke="#333" stroke-width=".8"/><path d="M8 .5Q10.5 .5 11 3" stroke="#2060e0" stroke-width="1" fill="none"/><path d="M1 10V2" stroke="#1a58c8" stroke-width="1.1"/></svg>
<svg style="left:1859px;top:64.5px" width="13" height="13" viewBox="0 0 13 13"><rect x=".5" y="4" width="5" height="6" fill="#888" stroke="#555" stroke-width=".7"/><path d="M5 4L8.5 .5L12 4L8.5 7.5Z" fill="#f5f010" stroke="#222" stroke-width=".8"/><path d="M3 10L7 6" stroke="#2040c0" stroke-width="1"/><path d="M7 7L11.5 12M11.5 7L7 12" stroke="#ff1010" stroke-width="1.6"/></svg>
<div class="a" style="left:779px;top:62px;width:1058px;height:17px;background:#e1e1e1;border:1px solid #adadad"></div>
<div class="ttl" style="left:797px;top:66.2px;font-size:8.4px">main ( : : : )</div>
<svg style="left:783px;top:65px" width="11" height="11" viewBox="0 0 11 11"><rect x="2.5" y=".5" width="7.5" height="9.5" fill="#fff" stroke="#111" stroke-width="1.1"/><path d="M4 7H8.5V9H4Z" fill="#999"/><path d="M.2 3.2L3 .8V2.2H6V4.2H3V5.6Z" fill="#10c010"/></svg>
<svg style="left:1824px;top:69px" width="8" height="5" viewBox="0 0 8 5"><path d="M.5 .5L4 4L7.5 .5" stroke="#666" fill="none" stroke-width="1"/></svg>
<div class="a" style="left:727px;top:83px;width:1150px;height:896px;border:1px solid #a9abb0;background:#fafafa"></div>
<div class="a" style="left:728px;top:84px;width:30px;height:879px;background:#f7f7f7"></div>
<div class="a" style="left:758px;top:84px;width:1px;height:879px;background:#c8c8c8"></div>
<div class="a" style="left:759px;top:377px;width:1102px;height:11px;background:#fdf0e4"></div>
<div class="a" style="left:760px;top:377px;width:1px;height:11px;background:#404040"></div>
<div class="a" style="left:759px;top:84px;width:1102px;height:878px;overflow:hidden">
<div class="code c" style="left:1.5px;top:1.90px">*</div>
<div class="code c" style="left:1.5px;top:13.16px">* Example for the usage of a Zivid 3D camera in HALCON</div>
<div class="code c" style="left:1.5px;top:24.42px">*</div>
<div class="code c" style="left:1.5px;top:35.68px">* This example shows how to acquire an HDR image from the camera</div>
<div class="code c" style="left:1.5px;top:46.94px">* and use it to generate a HALCON ObjectModel3D which is then</div>
<div class="code c" style="left:1.5px;top:58.20px">* visualized.</div>
<div class="code c" style="left:1.5px;top:69.46px">*</div>
<div class="code c" style="left:1.5px;top:80.72px">* Please note that you first need to install Zivid Software and</div>
<div class="code c" style="left:1.5px;top:91.98px">* correctly set the environment variables. After this, you can</div>
<div class="code c" style="left:1.5px;top:103.24px">* access the camera with the HALCON GenICamTL interface.</div>
<div class="code c" style="left:1.5px;top:114.50px">*</div>
<div class="code c" style="left:1.5px;top:137.02px">* Preparing graphics windows</div>
<div class="code d" style="left:1.5px;top:148.28px">dev_close_window ()</div>
<div class="code d" style="left:1.5px;top:159.54px">WinWidth := 960</div>
<div class="code d" style="left:1.5px;top:170.80px">WinHeight := 800</div>
<div class="code d" style="left:1.5px;top:182.06px">dev_open_window (0, 0, WinWidth, WinHeight, &#x27;blue&#x27;, Window3D)</div>
<div class="code d" style="left:1.5px;top:193.32px">dev_open_window (0, WinWidth, WinWidth, WinHeight, &#x27;black&#x27;, Window2D)</div>
<div class="code c" style="left:1.5px;top:215.84px">*Get first available Zivid device</div>
<div class="code o" style="left:1.5px;top:227.10px">info_framegrabber (&#x27;GenICamTL&#x27;,&#x27;device&#x27;, Information, Devices)</div>
<div class="code k" style="left:1.5px;top:238.36px">import &#x27;./../../Procedures&#x27;</div>
<div class="code p" style="left:1.5px;top:249.62px">get_first_available_zivid_device (Devices, Device)</div>
<div class="code c" style="left:1.5px;top:272.14px">* Connecting to the Zivid camera</div>
<div class="code o" style="left:1.5px;top:283.40px">open_framegrabber (&#x27;GenICamTL&#x27;,1, 1, 0, 0, 0, 0, &#x27;progressive&#x27;, -1, &#x27;default&#x27;, -1, &#x27;false&#x27;, &#x27;default&#x27;, Device, 0, 0, AcqHandle)</div>
<div class="code c" style="left:1.5px;top:305.92px">* Configuring 3D-settings</div>
<div class="code o" style="left:1.5px;top:317.18px">set_framegrabber_param (AcqHandle, &#x27;create_objectmodel3d&#x27;, &#x27;enable&#x27;)</div>
<div class="code o" style="left:1.5px;top:328.44px">set_framegrabber_param (AcqHandle, &#x27;add_objectmodel3d_overlay_attrib&#x27;, &#x27;enable&#x27;)</div>
<div class="code c" style="left:1.5px;top:350.96px">* Seting the timeout for aborting a pending grab to infinity</div>
<div class="code o" style="left:1.5px;top:362.22px">set_framegrabber_param (AcqHandle, &#x27;grab_timeout&#x27;, -1)</div>
<div class="code c" style="left:1.5px;top:384.74px">* Switching to the HDR mode</div>
<div class="code o" style="left:1.5px;top:396.00px">set_framegrabber_param (AcqHandle, &#x27;AcquisitionMode&#x27;, &#x27;MergedMultiFrame&#x27;)</div>
<div class="code c" style="left:1.5px;top:418.52px">* Reseting any previous HDR settings</div>
<div class="code o" style="left:1.5px;top:429.78px">set_framegrabber_param (AcqHandle, &#x27;MergedMultiFrameReset&#x27;, 1)</div>
<div class="code c" style="left:1.5px;top:452.30px">* Configuring HDR settings</div>
<div class="code o" style="left:1.5px;top:463.56px">set_framegrabber_param (AcqHandle, &#x27;MergedMultiFrameMode&#x27;, &#x27;HDR&#x27;)</div>
<div class="code o" style="left:1.5px;top:474.82px">set_framegrabber_param (AcqHandle, &#x27;MergedMultiFrameIris&#x27;, 16)</div>
<div class="code o" style="left:1.5px;top:486.08px">set_framegrabber_param (AcqHandle, &#x27;MergedMultiFrameAdd&#x27;, &#x27;1&#x27;)</div>
<div class="code o" style="left:1.5px;top:497.34px">set_framegrabber_param (AcqHandle, &#x27;MergedMultiFrameIris&#x27;, 20)</div>
<div class="code o" style="left:1.5px;top:508.60px">set_framegrabber_param (AcqHandle, &#x27;MergedMultiFrameAdd&#x27;, &#x27;1&#x27;)</div>
<div class="code o" style="left:1.5px;top:519.86px">set_framegrabber_param (AcqHandle, &#x27;MergedMultiFrameIris&#x27;,50)</div>
<div class="code o" style="left:1.5px;top:531.12px">set_framegrabber_param (AcqHandle, &#x27;MergedMultiFrameAdd&#x27;, &#x27;1&#x27;)</div>
<div class="code c" style="left:1.5px;top:553.64px">* Grabing the HDR image</div>
<div class="code o" style="left:1.5px;top:564.90px">grab_data (Image, Region, Contours, AcqHandle, ObjectModel3D)</div>
<div class="code c" style="left:1.5px;top:587.42px">* Extracting the following images: X, Y, Z, Contrast, and RGB</div>
<div class="code o" style="left:1.5px;top:598.68px">select_obj (Image, X, 1)</div>
<div class="code o" style="left:1.5px;top:609.94px">select_obj (Image, Y, 2)</div>
<div class="code o" style="left:1.5px;top:621.20px">select_obj (Image, Z, 3)</div>
<div class="code o" style="left:1.5px;top:632.46px">select_obj (Image, Confidence, 4)</div>
<div class="code o" style="left:1.5px;top:643.72px">select_obj (Image, RGBA, 5)</div>
<div class="code c" style="left:1.5px;top:666.24px">* Displaying the 2D color image</div>
<div class="code d" style="left:1.5px;top:677.50px">dev_set_window (Window2D)</div>
<div class="code d" style="left:1.5px;top:688.76px">dev_display (RGBA)</div>
<div class="code c" style="left:1.5px;top:711.28px">* Displaying the 3D color point cloud, press the button to continue</div>
<div class="code d" style="left:1.5px;top:722.54px">Instructions[0] := &#x27;Rotate: Left button&#x27;</div>
<div class="code d" style="left:1.5px;top:733.80px">Instructions[1] := &#x27;Zoom:   Shift + left button&#x27;</div>
<div class="code d" style="left:1.5px;top:745.06px">Instructions[2] := &#x27;Move:   Ctrl  + left button&#x27;</div>
<div class="code d" style="left:1.5px;top:756.32px">dev_set_window (Window3D)</div>
<div class="code p" style="left:1.5px;top:767.58px">visualize_object_model_3d (Window3D, ObjectModel3D, [], [], [&#x27;red_channel_attrib&#x27;,&#x27;green_channel_attrib&#x27;,&#x27;blue_channel_attrib&#x27;], [&#x27;&amp;overlay_red&#x27;,&#x27;&amp;overlay_green&#x27;,&#x27;&amp;overlay_blue&#x27;], [], [], [Instructions], PoseOut)</div>
<div class="code c" style="left:1.5px;top:790.10px">* Disconnecting from the Zivid Camera</div>
<div class="code o" style="left:1.5px;top:801.36px">close_framegrabber (AcqHandle)</div>
<div class="code c" style="left:1.5px;top:823.88px">* Closing graphics windows</div>
<div class="code d" style="left:1.5px;top:835.14px">dev_set_window (Window2D)</div>
<div class="code d" style="left:1.5px;top:846.40px">dev_close_window ()</div>
<div class="code d" style="left:1.5px;top:857.66px">dev_set_window (Window3D)</div>
<div class="code d" style="left:1.5px;top:868.92px">dev_close_window ()</div>
</div>
<div class="a" style="left:728px;top:84px;width:30px;height:878px;overflow:hidden">
<div class="ln" style="left:-2px;top:4.75px">1</div>
<div class="ln" style="left:-2px;top:19.75px">2</div>
<div class="ln" style="left:-2px;top:34.75px">3</div>
<div class="ln" style="left:-2px;top:49.75px">4</div>
<div class="ln" style="left:-2px;top:64.75px">5</div>
<div class="ln" style="left:-2px;top:79.75px">6</div>
<div class="ln" style="left:-2px;top:94.75px">7</div>
<div class="ln" style="left:-2px;top:109.75px">8</div>
<div class="ln" style="left:-2px;top:124.75px">9</div>
<div class="ln" style="left:-2px;top:139.75px">10</div>
<div class="ln" style="left:-2px;top:154.75px">11</div>
<div class="ln" style="left:-2px;top:169.75px">12</div>
<div class="ln" style="left:-2px;top:184.75px">13</div>
<div class="ln" style="left:-2px;top:199.75px">14</div>
<div class="ln" style="left:-2px;top:214.75px">15</div>
<div class="ln" style="left:-2px;top:229.75px">16</div>
<div class="ln" style="left:-2px;top:244.75px">17</div>
<div class="ln" style="left:-2px;top:259.75px">18</div>
<div class="ln" style="left:-2px;top:274.75px">19</div>
<div class="ln" style="left:-2px;top:289.75px">20</div>
<div class="ln" style="left:-2px;top:304.75px">21</div>
<div class="ln" style="left:-2px;top:319.75px">22</div>
<div class="ln" style="left:-2px;top:334.75px">23</div>
<div class="ln" style="left:-2px;top:349.75px">24</div>
<div class="ln" style="left:-2px;top:364.75px">25</div>
<div class="ln" style="left:-2px;top:379.75px">26</div>
<div class="ln" style="left:-2px;top:394.75px">27</div>
<div class="ln" style="left:-2px;top:409.75px">28</div>
<div class="ln" style="left:-2px;top:424.75px">29</div>
<div class="ln" style="left:-2px;top:439.75px">30</div>
<div class="ln" style="left:-2px;top:454.75px">31</div>
<div class="ln" style="left:-2px;top:469.75px">32</div>
<div class="ln" style="left:-2px;top:484.75px">33</div>
<div class="ln" style="left:-2px;top:499.75px">34</div>
<div class="ln" style="left:-2px;top:514.75px">35</div>
<div class="ln" style="left:-2px;top:529.75px">36</div>
<div class="ln" style="left:-2px;top:544.75px">37</div>
<div class="ln" style="left:-2px;top:559.75px">38</div>
<div class="ln" style="left:-2px;top:574.75px">39</div>
<div class="ln" style="left:-2px;top:589.75px">40</div>
<div class="ln" style="left:-2px;top:604.75px">41</div>
<div class="ln" style="left:-2px;top:619.75px">42</div>
<div class="ln" style="left:-2px;top:634.75px">43</div>
<div class="ln" style="left:-2px;top:649.75px">44</div>
<div class="ln" style="left:-2px;top:664.75px">45</div>
<div class="ln" style="left:-2px;top:679.75px">46</div>
<div class="ln" style="left:-2px;top:694.75px">47</div>
<div class="ln" style="left:-2px;top:709.75px">48</div>
<div class="ln" style="left:-2px;top:724.75px">49</div>
<div class="ln" style="left:-2px;top:739.75px">50</div>
<div class="ln" style="left:-2px;top:754.75px">51</div>
<div class="ln" style="left:-2px;top:769.75px">52</div>
<div class="ln" style="left:-2px;top:784.75px">53</div>
<div class="ln" style="left:-2px;top:799.75px">54</div>
<div class="ln" style="left:-2px;top:814.75px">55</div>
<div class="ln" style="left:-2px;top:829.75px">56</div>
<div class="ln" style="left:-2px;top:844.75px">57</div>
<div class="ln" style="left:-2px;top:859.75px">58</div>
<div class="ln" style="left:-2px;top:874.75px">59</div>
</div>
<div class="a" style="left:1861px;top:84px;width:15px;height:879px;background:#f0f0f0"></div>
<div class="a" style="left:1862px;top:100px;width:13px;height:835px;background:#cdcdcd"></div>
<div class="a" style="left:728px;top:963px;width:1148px;height:15px;background:#f0f0f0"></div>
<div class="a" style="left:744px;top:964px;width:1101px;height:13px;background:#cdcdcd"></div>
<div class="a" style="left:0;top:1017px;width:1920px;height:17px;background:#f0f0f0;border-top:1px solid #fff"></div>
<div class="ttl" style="left:1871px;top:1021.5px;font-size:8px;color:#202030;-webkit-text-stroke:0.2px #202030">92, 6</div>
<svg style="left:692px;top:555px" width="9" height="5" viewBox="0 0 9 5"><path d="M.5 4.5L4.5 .5L8.5 4.5" stroke="#505050" stroke-width="1.3" fill="none"/></svg>
<svg style="left:692px;top:613px" width="9" height="5" viewBox="0 0 9 5"><path d="M.5 .5L4.5 4.5L8.5 .5" stroke="#505050" stroke-width="1.3" fill="none"/></svg>
<svg style="left:1864px;top:89.5px" width="9" height="5" viewBox="0 0 9 5"><path d="M.5 4.5L4.5 .5L8.5 4.5" stroke="#505050" stroke-width="1.3" fill="none"/></svg>
<svg style="left:1864px;top:951.5px" width="9" height="5" viewBox="0 0 9 5"><path d="M.5 .5L4.5 4.5L8.5 .5" stroke="#505050" stroke-width="1.3" fill="none"/></svg>
<svg style="left:732px;top:966px" width="5" height="9" viewBox="0 0 5 9"><path d="M4.5 .5L.5 4.5L4.5 8.5" stroke="#505050" stroke-width="1.3" fill="none"/></svg>
<svg style="left:1866px;top:966px" width="5" height="9" viewBox="0 0 5 9"><path d="M.5 .5L4.5 4.5L.5 8.5" stroke="#505050" stroke-width="1.3" fill="none"/></svg>
<svg style="left:731px;top:279.5px" width="12" height="13" viewBox="0 0 12 13"><path d="M.8 4H5.5V.8L11 6.5L5.5 12.2V9H.8Z" fill="#10d010" stroke="#000" stroke-width="1.1"/></svg>
<svg style="left:752px;top:471px" width="7" height="8" viewBox="0 0 7 8"><path d="M0 0L7 4L0 8Z" fill="#000"/></svg>
<svg style="left:1px;top:1019px" width="13" height="13" viewBox="0 0 13 13"><path d="M1 4L4 1M1 7L5 3M3 10L8 5M6 12L11 7M9 12L12 9" stroke="#7090c0" stroke-width=".8"/></svg>
<div class="a" style="left:14px;top:1019px;width:1px;height:14px;background:#d0d0d0;box-shadow:1px 0 0 #fafafa"></div>
<div class="a" style="left:1541px;top:1019px;width:1px;height:14px;background:#d0d0d0;box-shadow:1px 0 0 #fafafa"></div>
<div class="a" style="left:1767.5px;top:1019px;width:1px;height:14px;background:#d0d0d0;box-shadow:1px 0 0 #fafafa"></div>
<div class="a" style="left:1785px;top:1019px;width:1px;height:14px;background:#d0d0d0;box-shadow:1px 0 0 #fafafa"></div>
<div class="a" style="left:1856px;top:1019px;width:1px;height:14px;background:#d0d0d0;box-shadow:1px 0 0 #fafafa"></div>
<div class="a" style="left:1548px;top:1026px;width:2px;height:1px;background:#333"></div>
<div class="a" style="left:1801px;top:1026px;width:2px;height:1px;background:#333"></div>
<svg style="left:1772px;top:1019.5px" width="12" height="12" viewBox="0 0 12 12"><circle cx="5.5" cy="6.5" r="4.5" fill="#fafafa" stroke="#222" stroke-width="1.1"/><rect x="4.3" y=".3" width="2.4" height="1.3" fill="#222"/><path d="M5.5 6.5L9 4.5" stroke="#e02020" stroke-width=".9"/></svg>
<div class="a" style="left:1788px;top:1019.5px;width:7px;height:12px;background:linear-gradient(#f5c020,#2030c0);border:1px solid #333"></div>
<svg style="left:1859px;top:1019.5px" width="12" height="13" viewBox="0 0 12 13"><path d="M2.5 0V10H10M0 2.5H10V12" stroke="#1a3a80" stroke-width="1.3" fill="none"/><path d="M7 9L9 11" stroke="#111" stroke-width="1"/></svg>
</body></html>
